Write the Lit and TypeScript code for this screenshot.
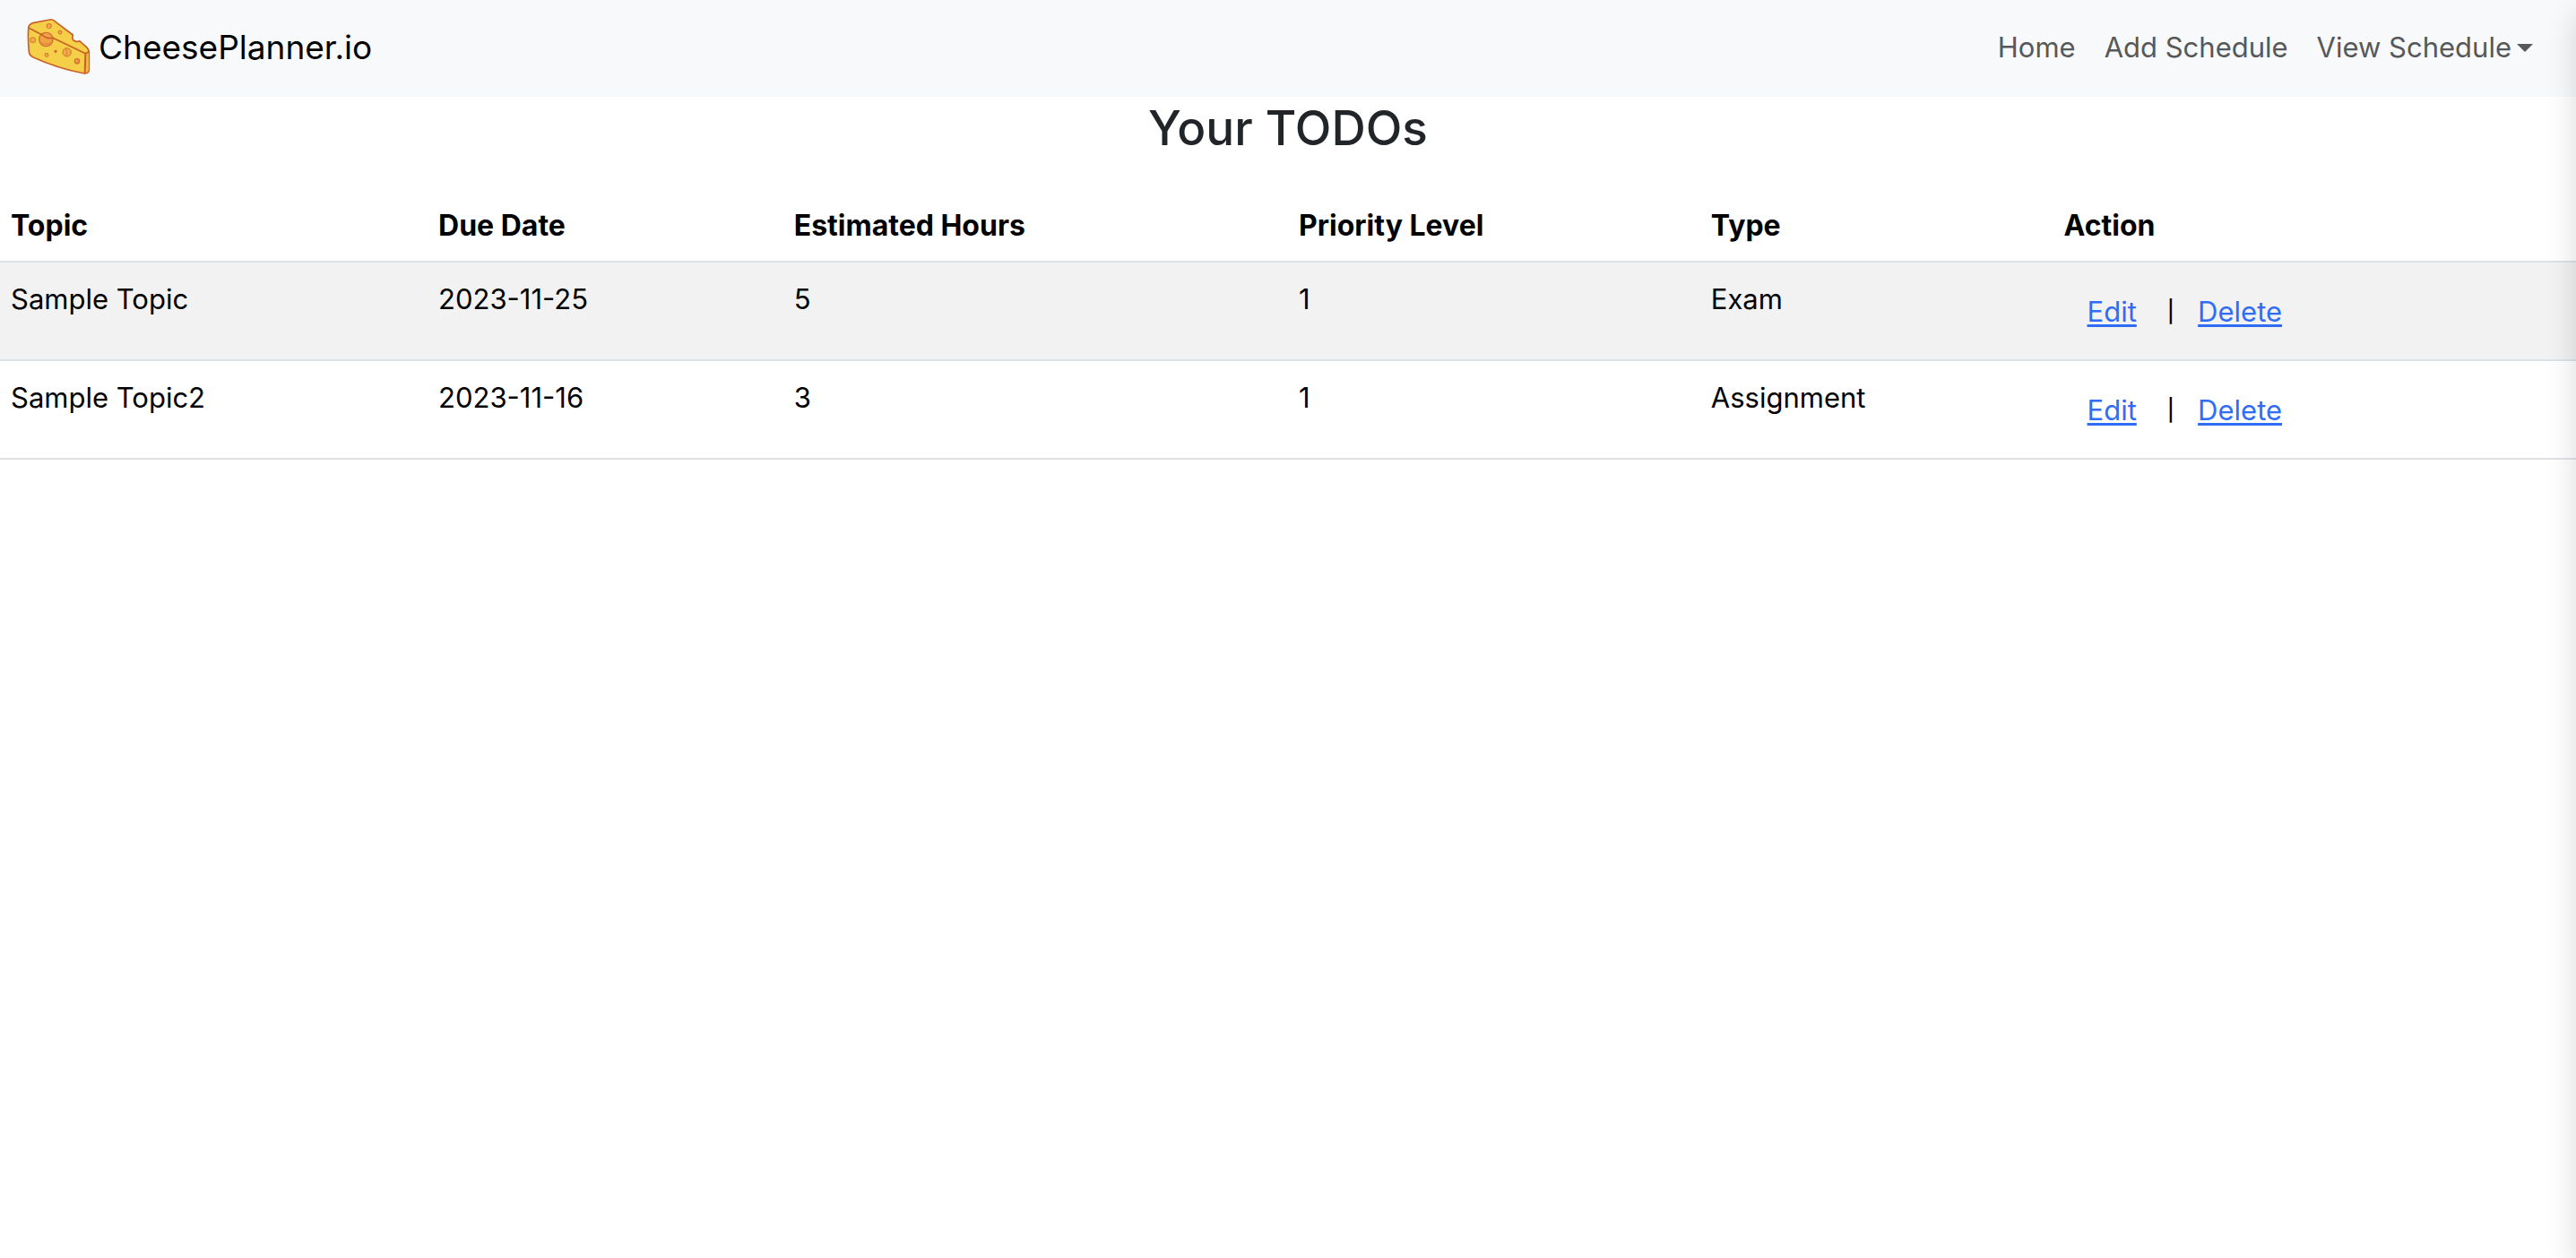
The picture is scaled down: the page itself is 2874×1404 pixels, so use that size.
import { LitElement, html, css, svg } from "lit";
import { customElement, state } from "lit/decorators.js";

interface Todo {
  topic: string;
  due: string;
  hours: number;
  priority: number;
  type: string;
}

const cheese = svg`
  <path d="M38 55 Q42 49 50 47 L106 36 Q113 34 119 38 L184 87 Q180 99 187 106 Q197 112 206 107 L229 127 Q238 135 238 146 L238 205 Q236 216 222 216 Q130 198 50 161 Q38 155 37 143 Q33 100 35 66 Q35 59 38 55Z" fill="#f4cf47" stroke="#c9602a" stroke-width="5" stroke-linejoin="round"/>
  <path d="M227 149 L237 143 L237 204 Q236 212 227 214Z" fill="#f2b545"/>
  <g fill="#f1ab45" stroke="#cf7130" stroke-width="3">
    <circle cx="104" cy="57" r="8"/>
    <circle cx="141" cy="78" r="6"/>
    <circle cx="50" cy="104" r="9"/>
    <circle cx="94" cy="102" r="23" fill="#f0a344" stroke-width="4"/>
    <circle cx="96" cy="154" r="6"/>
    <circle cx="126" cy="142" r="4" fill="#d27a33"/>
    <circle cx="164" cy="145" r="14"/>
    <circle cx="198" cy="175" r="8" stroke-width="4"/>
  </g>
  <g fill="none" stroke="#c9602a" stroke-linecap="round" stroke-linejoin="round">
    <path d="M37 64 L80 86 Q98 102 117 97 L226 149 L237 143" stroke-width="5"/>
    <path d="M226 149 L224 214" stroke-width="6"/>
    <path d="M76 112 Q92 124 112 112 M160 133 Q168 146 163 157 M195 180 Q202 180 201 171" stroke="#d98238" stroke-width="3"/>
  </g>
`;

@customElement("app-root")
export class AppRoot extends LitElement {
  static styles = css`
    :host {
      display: block;
      position: relative;
      min-height: 100vh;
      overflow: hidden;
      background: #fff;
      color: #000;
      font-family: Inter, "Liberation Sans", sans-serif;
      font-size: 31px;
      line-height: 48px;
    }
    .navbar {
      display: flex;
      align-items: center;
      justify-content: space-between;
      padding: 13px 32px 15px 24px;
      background: #f8f9fb;
    }
    .brand {
      display: flex;
      align-items: center;
      gap: 4px;
      color: #000;
      font-size: 37px;
      text-decoration: none;
    }
    .logo {
      width: 82px;
      height: 72px;
    }
    .links {
      display: flex;
      margin: 0;
      padding: 0;
      list-style: none;
    }
    .link {
      display: flex;
      align-items: center;
      gap: 6px;
      padding: 16px;
      border: 0;
      background: none;
      color: #575859;
      font: inherit;
      text-decoration: none;
      cursor: pointer;
    }
    .caret {
      border: solid transparent;
      border-width: 9px 9px 0;
      border-top-color: currentColor;
    }
    .title {
      margin: 0 0 34px;
      padding-top: 2px;
      color: #212529;
      font-size: 53px;
      font-weight: 500;
      line-height: 67px;
      text-align: center;
    }
    .todos {
      width: 100%;
      table-layout: fixed;
      border-collapse: separate;
      border-spacing: 0;
    }
    .topic { width: 16.6%; }
    .due { width: 13.8%; }
    .hours { width: 19.6%; }
    .priority { width: 16%; }
    .type { width: 13.7%; }
    .cell {
      box-sizing: border-box;
      padding: 17px 12px 15px;
      border-bottom: 2px solid #dee2e6;
      text-align: left;
      vertical-align: top;
    }
    .head {
      font-size: 32px;
      font-weight: 700;
    }
    .row:nth-child(odd) .cell {
      background: #f2f2f2;
    }
    .actions {
      display: flex;
      align-items: center;
    }
    .action {
      padding: 12px 24px;
      border: 2px solid transparent;
      background: none;
      color: #306cf6;
      font: inherit;
      text-decoration: underline;
      text-decoration-thickness: 3px;
      text-underline-offset: 3px;
      cursor: pointer;
    }
    .divider {
      padding-left: 8px;
      font-size: 24px;
      font-weight: 500;
    }
    .drawer {
      position: absolute;
      top: 0;
      bottom: 0;
      left: 100%;
      width: 100%;
      box-shadow: 0 16px 32px rgba(0, 0, 0, 0.15);
      pointer-events: none;
    }
  `;

  @state() private todos: Todo[] = [
    { topic: "Sample Topic", due: "2023-11-25", hours: 5, priority: 1, type: "Exam" },
    { topic: "Sample Topic2", due: "2023-11-16", hours: 3, priority: 1, type: "Assignment" },
  ];

  private renderRow(todo: Todo) {
    return html`
      <tr class="row">
        <td class="cell">${todo.topic}</td>
        <td class="cell">${todo.due}</td>
        <td class="cell">${todo.hours}</td>
        <td class="cell">${todo.priority}</td>
        <td class="cell">${todo.type}</td>
        <td class="cell">
          <div class="actions">
            <button class="action" type="button">Edit</button>
            <span class="divider">|</span>
            <button class="action" type="button">Delete</button>
          </div>
        </td>
      </tr>
    `;
  }

  render() {
    return html`
      <header>
        <nav class="navbar">
          <a class="brand" href="#">
            <svg class="logo" viewBox="12 21 246 216" aria-hidden="true">${cheese}</svg>
            <span>CheesePlanner.io</span>
          </a>
          <ul class="links">
            <li><a class="link" href="#">Home</a></li>
            <li><a class="link" href="#add">Add Schedule</a></li>
            <li>
              <button class="link" type="button" aria-haspopup="true" aria-expanded="false">
                View Schedule<span class="caret"></span>
              </button>
            </li>
          </ul>
        </nav>
      </header>
      <main>
        <h2 class="title">Your TODOs</h2>
        <table class="todos">
          <thead>
            <tr>
              <th class="cell head topic" scope="col">Topic</th>
              <th class="cell head due" scope="col">Due Date</th>
              <th class="cell head hours" scope="col">Estimated Hours</th>
              <th class="cell head priority" scope="col">Priority Level</th>
              <th class="cell head type" scope="col">Type</th>
              <th class="cell head" scope="col">Action</th>
            </tr>
          </thead>
          <tbody>
            ${this.todos.map((todo) => this.renderRow(todo))}
          </tbody>
        </table>
      </main>
      <div class="drawer"></div>
    `;
  }
}
